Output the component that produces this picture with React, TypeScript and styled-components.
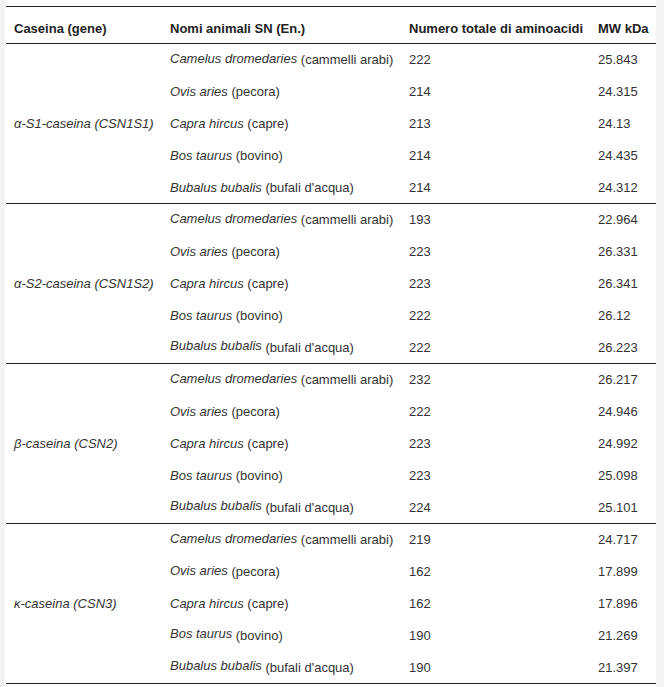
import React from "react";
import styled, { createGlobalStyle } from "styled-components";

const GlobalStyle = createGlobalStyle`
  html, body {
    margin: 0;
    padding: 0;
    background: #f3f3f3;
  }
  body {
    font-family: "Liberation Sans", Arial, sans-serif;
  }
`;

const Page = styled.div`
  margin-left: 5px;
  width: 651px;
  min-height: 687px;
  background: #ffffff;
  padding-top: 6px;
  box-sizing: border-box;
`;

const Table = styled.table`
  margin-left: 1px;
  width: 650px;
  table-layout: fixed;
  border-collapse: collapse;
  font-size: 13px;
  color: #333;
  border-top: 1px solid #222;
`;

const Head = styled.thead`
  border-bottom: 1px solid #222;
`;

const HeadCell = styled.th`
  padding: 14px 8px 7px;
  line-height: 15px;
  text-align: left;
  font-weight: bold;
  color: #222;
  white-space: nowrap;
  vertical-align: bottom;
`;

const Group = styled.tbody`
  border-bottom: 1px solid #222;
`;

const Cell = styled.td`
  height: 31.8px;
  padding: 0 8px;
  line-height: 15px;
  vertical-align: middle;
  white-space: nowrap;
`;

const GeneCell = styled(Cell)`
  font-style: italic;
`;

const Latin = styled.i<{ $lift?: boolean }>`
  font-style: italic;
  position: relative;
  top: ${(p) => (p.$lift ? "-1.5px" : "0")};
`;

type Animal = { latin: string; common: string; aa: number; mw: string; lift?: boolean };
type GroupData = { gene: string; rows: Animal[] };

const data: GroupData[] = [
  {
    gene: "α-S1-caseina (CSN1S1)",
    rows: [
      { latin: "Camelus dromedaries", common: "(cammelli arabi)", aa: 222, mw: "25.843", lift: true },
      { latin: "Ovis aries", common: "(pecora)", aa: 214, mw: "24.315" },
      { latin: "Capra hircus", common: "(capre)", aa: 213, mw: "24.13" },
      { latin: "Bos taurus", common: "(bovino)", aa: 214, mw: "24.435" },
      { latin: "Bubalus bubalis", common: "(bufali d'acqua)", aa: 214, mw: "24.312" },
    ],
  },
  {
    gene: "α-S2-caseina (CSN1S2)",
    rows: [
      { latin: "Camelus dromedaries", common: "(cammelli arabi)", aa: 193, mw: "22.964", lift: true },
      { latin: "Ovis aries", common: "(pecora)", aa: 223, mw: "26.331" },
      { latin: "Capra hircus", common: "(capre)", aa: 223, mw: "26.341" },
      { latin: "Bos taurus", common: "(bovino)", aa: 222, mw: "26.12" },
      { latin: "Bubalus bubalis", common: "(bufali d'acqua)", aa: 222, mw: "26.223", lift: true },
    ],
  },
  {
    gene: "β-caseina (CSN2)",
    rows: [
      { latin: "Camelus dromedaries", common: "(cammelli arabi)", aa: 232, mw: "26.217", lift: true },
      { latin: "Ovis aries", common: "(pecora)", aa: 222, mw: "24.946" },
      { latin: "Capra hircus", common: "(capre)", aa: 223, mw: "24.992" },
      { latin: "Bos taurus", common: "(bovino)", aa: 223, mw: "25.098" },
      { latin: "Bubalus bubalis", common: "(bufali d'acqua)", aa: 224, mw: "25.101", lift: true },
    ],
  },
  {
    gene: "κ-caseina (CSN3)",
    rows: [
      { latin: "Camelus dromedaries", common: "(cammelli arabi)", aa: 219, mw: "24.717", lift: true },
      { latin: "Ovis aries", common: "(pecora)", aa: 162, mw: "17.899", lift: true },
      { latin: "Capra hircus", common: "(capre)", aa: 162, mw: "17.896" },
      { latin: "Bos taurus", common: "(bovino)", aa: 190, mw: "21.269", lift: true },
      { latin: "Bubalus bubalis", common: "(bufali d'acqua)", aa: 190, mw: "21.397", lift: true },
    ],
  },
];

export default function App() {
  return (
    <>
      <GlobalStyle />
      <Page>
        <Table>
          <colgroup>
            <col style={{ width: 156 }} />
            <col style={{ width: 239 }} />
            <col style={{ width: 189 }} />
            <col style={{ width: 66 }} />
          </colgroup>
          <Head>
            <tr>
              <HeadCell>Caseina (gene)</HeadCell>
              <HeadCell>Nomi animali SN (En.)</HeadCell>
              <HeadCell>Numero totale di aminoacidi</HeadCell>
              <HeadCell>MW kDa</HeadCell>
            </tr>
          </Head>
          {data.map((g) => (
            <Group key={g.gene}>
              {g.rows.map((r, i) => (
                <tr key={r.latin}>
                  {i === 0 && <GeneCell rowSpan={g.rows.length}>{g.gene}</GeneCell>}
                  <Cell>
                    <Latin $lift={r.lift}>{r.latin}</Latin> {r.common}
                  </Cell>
                  <Cell>{r.aa}</Cell>
                  <Cell>{r.mw}</Cell>
                </tr>
              ))}
            </Group>
          ))}
        </Table>
      </Page>
    </>
  );
}
